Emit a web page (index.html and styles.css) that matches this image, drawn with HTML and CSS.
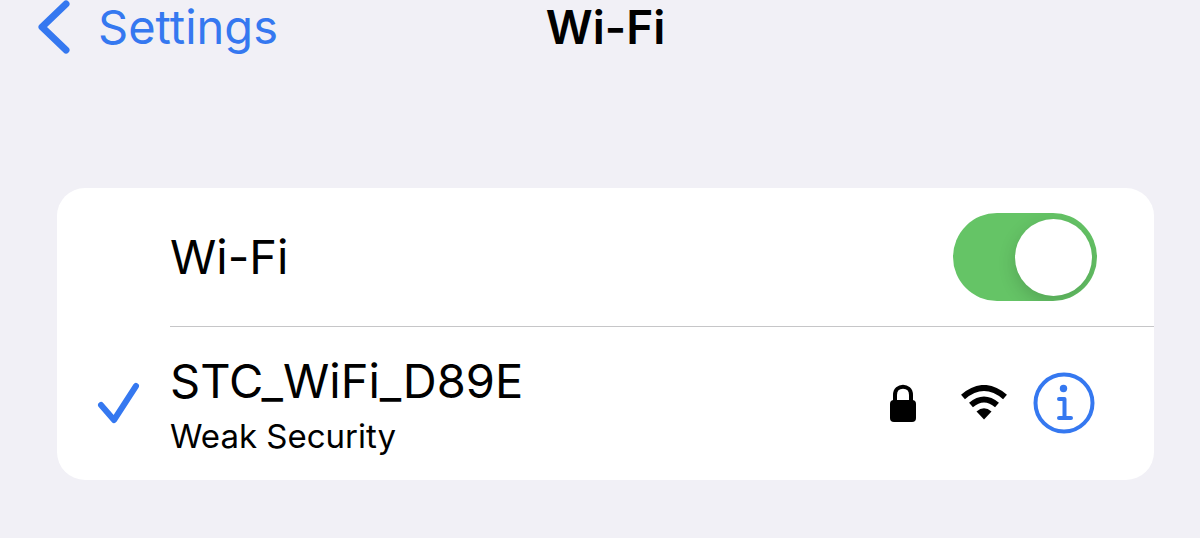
FILE: index.html
```html
<!DOCTYPE html>
<html lang="en">
<head>
    <meta charset="UTF-8">
    <meta name="viewport" content="width=device-width, initial-scale=1">
    <title>Wi-Fi</title>
    <link rel="stylesheet" href="styles.css">
</head>
<body>
    <header class="navbar">
        <a class="back" href="#">
            <svg class="chevron" width="34" height="54" viewBox="0 0 34 54" aria-hidden="true">
                <path d="M28 4L4 27L28 50" />
            </svg>
            Settings
        </a>
        <h1>Wi-Fi</h1>
    </header>

    <main class="card">
        <div class="row">
            <label class="name" for="wifi">Wi-Fi</label>
            <input class="switch" type="checkbox" role="switch" id="wifi" checked>
        </div>

        <div class="row network">
            <svg class="check" width="44" height="42" viewBox="0 0 44 42" aria-hidden="true">
                <path d="M4 23L17 38L39 4" />
            </svg>
            <div class="text">
                <div class="name">STC_WiFi_D89E</div>
                <div class="note">Weak Security</div>
            </div>
            <div class="icons">
                <svg width="26" height="38" viewBox="0 0 26 38" aria-hidden="true">
                    <rect x="0" y="16" width="26" height="22" rx="4" />
                    <path class="shackle" d="M5 18V11C5 0 21 0 21 11V18" />
                </svg>
                <svg width="46" height="36" viewBox="0 0 46 36" aria-hidden="true">
                    <path class="arc" d="M2 12Q23 -6 44 12" />
                    <path class="arc" d="M10 20Q23 9 36 20" />
                    <path d="M15.500 26.500Q23 20 30.500 26.500L23 34.500Z" />
                </svg>
                <button class="info" type="button" aria-label="Network details">
                    <svg width="62" height="62" viewBox="0 0 62 62" aria-hidden="true">
                        <circle class="ring" cx="31" cy="31" r="28.500" />
                        <circle class="dot" cx="30.500" cy="16.500" r="3.700" />
                        <path d="M26 27H31.500V45.500M26 46H38" />
                    </svg>
                </button>
            </div>
        </div>
    </main>
</body>
</html>
```

FILE: styles.css
```css
* {
    box-sizing: border-box;
}
body {
    margin: 0;
    padding: 0 46px 58px 57px;
    background-color: #f1f0f6;
    color: #000;
    font-family: Inter, "Liberation Sans", sans-serif;
    font-size: 47px;
    line-height: 54px;
}
svg {
    display: block;
}
.navbar {
    display: grid;
    grid-template-columns: 1fr auto 1fr;
    margin-bottom: 134px;
}
.back {
    display: flex;
    gap: 26px;
    margin-left: -19px;
    color: #3578f0;
    text-decoration: none;
}
h1 {
    margin: 0;
    font-size: 46px;
    font-weight: 600;
}
.chevron path,
.check path {
    fill: none;
    stroke: #3578f0;
    stroke-width: 7;
    stroke-linecap: round;
    stroke-linejoin: round;
}
.check path {
    stroke-width: 6;
}
.card {
    background-color: #fff;
    border-radius: 28px;
}
.row {
    display: flex;
    align-items: center;
    justify-content: space-between;
    margin-left: 113px;
    padding: 25px 57px 25px 0;
}
.network {
    margin-left: 0;
    padding: 16px 59px 16px 40px;
    background: linear-gradient(#c6c6c8, #c6c6c8) 113px 0 / 100% 1px no-repeat;
}
.text {
    flex: 1;
    margin-left: 29px;
    padding-top: 12px;
}
.note {
    font-size: 33px;
    line-height: 56px;
}
.switch {
    appearance: none;
    display: flex;
    justify-content: flex-end;
    width: 144px;
    height: 88px;
    margin: 0;
    padding: 6px 5px;
    border-radius: 44px;
    background-color: #65c466;
    overflow: hidden;
    cursor: pointer;
}
.switch::before {
    content: "";
    width: 77px;
    height: 77px;
    border-radius: 50%;
    background-color: #fff;
    box-shadow: 0 6px 18px rgba(0, 0, 0, 0.16);
}
.switch:not(:checked) {
    justify-content: flex-start;
    background-color: #e9e9ea;
}
.icons {
    display: flex;
    align-items: center;
}
.icons svg + svg {
    margin-left: 45px;
}
.shackle {
    fill: none;
    stroke: #000;
    stroke-width: 4;
}
.arc {
    fill: none;
    stroke: #000;
    stroke-width: 6;
}
.info {
    margin: 0 0 0 26px;
    padding: 0;
    border: none;
    background: none;
    cursor: pointer;
}
.info path,
.ring {
    fill: none;
    stroke: #3578f0;
    stroke-width: 4;
    stroke-linecap: round;
    stroke-linejoin: round;
}
.dot {
    fill: #3578f0;
}
```
